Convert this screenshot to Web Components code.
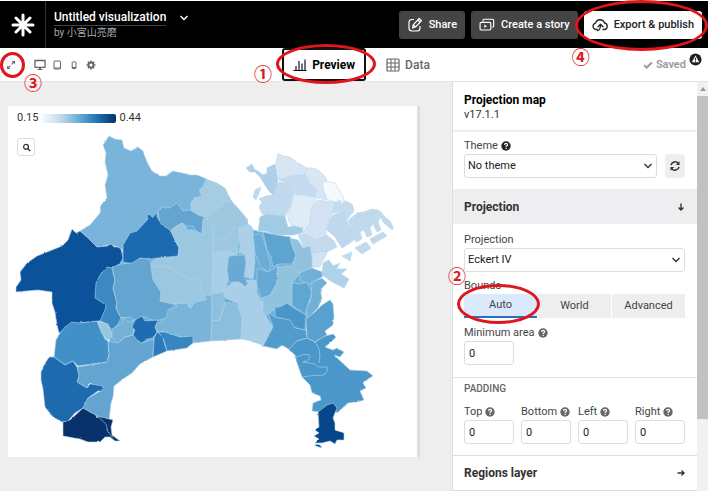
<!DOCTYPE html>
<html lang="en">
<head>
<meta charset="utf-8">
<title>Untitled visualization</title>
<style>
html,body{margin:0;height:100%}
body{font-family:Roboto,"Noto Sans CJK JP",sans-serif;font-size:11px;line-height:16px;color:#333;background:#fff;overflow:hidden}
</style>
</head>
<body>
<viz-editor></viz-editor>
<script>
const define=(name,html)=>customElements.define(name,class extends HTMLElement{
  constructor(){super();this.attachShadow({mode:'open'}).innerHTML='<style>*{box-sizing:border-box}button,input,select{font:inherit;color:inherit;margin:0}</style>'+(typeof html==='function'?html(this):html);}
});

const ICONS={
  burst:['0 0 24 24','<g stroke="currentColor" stroke-width="3" stroke-linecap="round"><path d="M12 2v20M2 12h20M5 5l14 14M19 5L5 19"/></g>'],
  down:['0 0 10 10','<path d="M1.5 3l3.500 3.500L8.500 3" fill="none" stroke="currentColor" stroke-width="1.400"/>'],
  share:['0 0 16 16','<path d="M7 2.500H5Q2 2.500 2 5.500V11q0 3 3 3h5q3 0 3-3V9M5.500 11l.7-3.200 6-6.300 2.300 2.200-6 6.300zM10.800 3l2.300 2.200M6.200 7.800l2.300 2.200" fill="none" stroke="currentColor" stroke-width="1.200" stroke-linejoin="round"/>'],
  story:['0 0 18 16','<path d="M4.500 4V3q0-1.500 1.500-1.500h9q1.500 0 1.500 1.500v6q0 1.500-1.500 1.500M2.500 5h9.500q1.300 0 1.300 1.300v6q0 1.300-1.300 1.300H2.500q-1.300 0-1.300-1.300v-6Q1.200 5 2.500 5z" fill="none" stroke="currentColor" stroke-width="1.300"/><path d="M6 7.500v3.600l3-1.800z" fill="currentColor"/>'],
  cloud:['0 0 16 16','<path d="M5 12.500H4A3.200 3.200 0 0 1 3.500 6.200 4.700 4.700 0 0 1 12.500 6a3.300 3.300 0 0 1 0 6.500H11M5.500 13.500q3-.5 3-5.500M6 9.800L8.500 7.300 11 9.800" fill="none" stroke="currentColor" stroke-width="1.300" stroke-linejoin="round" stroke-linecap="round"/>'],
  chart:['0 0 14 14','<path d="M.5 12.500h13M3 12V8M6 12V3M9 12V5.500M12 12V1.500" fill="none" stroke="currentColor" stroke-width="1.100"/>'],
  grid:['0 0 14 14','<rect x="1" y="1" width="12" height="12" rx="1" fill="none" stroke="currentColor" stroke-width="1.200"/><path d="M5 1v12M9 1v12M1 5h12M1 9h12" stroke="currentColor"/>'],
  expand:['0 0 10 10','<path d="M1.500 8.500l2.800-2.800M5.700 4.300l2.800-2.800" stroke="currentColor" stroke-width="1.200"/><path d="M5.800 1H9v3.200zM1 5.800V9h3.200z" fill="currentColor"/>'],
  desktop:['0 0 12 12','<path d="M1 1.500h10v6.800H1z" fill="none" stroke="currentColor" stroke-width="1.300"/><path d="M5 8h2v2h1.500v1h-5v-1H5z" fill="currentColor"/>'],
  tablet:['0 0 12 12','<rect x="3" y="2" width="6.500" height="8" rx=".8" fill="none" stroke="currentColor"/><path d="M3 9h6.500" stroke="currentColor"/>'],
  phone:['0 0 12 12','<rect x="4.200" y="2.800" width="3.800" height="6.800" rx=".8" fill="none" stroke="currentColor"/><path d="M4 8.500h4" stroke="currentColor"/>'],
  gear:['0 0 12 12','<circle cx="6" cy="6" r="2.500" fill="none" stroke="currentColor" stroke-width="1.900"/><path d="M6 1.600v1.700M6 8.700v1.700M1.600 6h1.700M8.700 6h1.700M2.900 2.900l1.200 1.200M7.900 7.900l1.200 1.200M9.100 2.900L7.900 4.100M4.100 7.900L2.900 9.100" stroke="currentColor" stroke-width="1.500"/>'],
  tick:['0 0 10 10','<path d="M1.200 5.200l2.500 2.500L8.800 2.500" fill="none" stroke="currentColor" stroke-width="2"/>'],
  warn:['0 0 14 14','<circle cx="7" cy="7" r="6.500" fill="#222"/><path d="M7 2.800l4 7.200H3z" fill="#fff"/><path d="M7 5.200v2.500M7 8.300v1" stroke="#222" stroke-width="1.200"/>'],
  help:['0 0 10 10','<circle cx="5" cy="5" r="4.700" fill="currentColor"/><path d="M3.500 3.900q.1-1.500 1.600-1.500t1.500 1.300Q6.600 4.700 5.200 5v1M5.200 6.700v1.200" fill="none" stroke="#fff" stroke-width="1.200"/>'],
  refresh:['0 0 12 12','<path d="M2 5.200A4.200 4.200 0 0 1 9.300 3.300M10 6.800A4.200 4.200 0 0 1 2.700 8.700" fill="none" stroke="currentColor" stroke-width="1.500"/><path d="M10.500 1.200v3.700H6.800zM1.500 10.800V7.100h3.700z" fill="currentColor"/>'],
  arrowdown:['0 0 10 10','<path d="M5 1.500v6.500M2.500 5.500L5 8l2.500-2.500" fill="none" stroke="currentColor" stroke-width="1.400"/>'],
  arrowright:['0 0 10 10','<path d="M1.500 5H8M5.500 2.500L8 5 5.500 7.500" fill="none" stroke="currentColor" stroke-width="1.400"/>'],
  search:['0 0 10 10','<circle cx="4.500" cy="4.300" r="2.700" fill="none" stroke="currentColor" stroke-width="1.400"/><path d="M6.300 6.200L9 9" stroke="currentColor" stroke-width="1.600"/>']
};
define('ui-icon',el=>{const [box,art]=ICONS[el.getAttribute('name')];
  return `<style>:host{display:inline-flex;flex:none;width:var(--size,10px);height:var(--size,10px)}svg{width:100%;height:100%}</style><svg viewBox="${box}" aria-hidden="true">${art}</svg>`;});

/* Red ellipse laid over its positioned parent, with a step number beside it */
define('ring-note',`<style>
:host{position:absolute;inset:var(--ring);z-index:5;border:3px solid #e0161d;border-radius:50%;pointer-events:none}
span{position:absolute;inset:var(--num);width:20px;height:20px;font:700 18px/20px "Noto Sans CJK JP",sans-serif;color:#e0161d;text-align:center}
</style><span><slot></slot></span>`);

define('app-header',`<style>
:host{display:flex;align-items:center;height:47px;margin-top:1px;background:#000;color:#fff;padding-right:6px}
.logo{display:grid;place-items:center;width:46px;align-self:stretch;border-right:1px solid #333;--size:24px}
.title{flex:1;padding-left:8px}
h1{display:flex;align-items:center;gap:13px;margin:0;font-size:12px;line-height:16px;font-weight:500}
h1 span{border-bottom:1px solid #444}
p{margin:0;font-size:10px;line-height:14px;color:#aaa}
.actions{display:flex;gap:6px}
.slot{position:relative}
button{display:flex;align-items:center;justify-content:center;gap:6px;height:28px;padding:0 8px;border:0;border-radius:3px;background:#444;color:#fff;font-size:11px;font-weight:500;white-space:nowrap;--size:16px}
.pub{background:#fff;color:#222}
ring-note{--ring:-11px -6px -12px -9px;--num:43px auto auto -7px}
</style>
<div class="logo"><ui-icon name="burst"></ui-icon></div>
<div class="title"><h1><span>Untitled visualization</span><ui-icon name="down"></ui-icon></h1><p>by 小宮山亮磨</p></div>
<div class="actions"><button><ui-icon name="share"></ui-icon>Share</button>
<button><ui-icon name="story"></ui-icon>Create a story</button>
<div class="slot"><button class="pub"><ui-icon name="cloud"></ui-icon>Export &amp; publish</button><ring-note>④</ring-note></div></div>`);

define('tool-bar',`<style>
:host{display:grid;grid-template-columns:1fr auto 1fr;height:34px;padding-left:4px;border-bottom:1px solid #e4e4e4;background:#fff}
.views{display:flex;align-items:center;gap:3px}
.views button{display:grid;place-items:center;border:0;padding:0;background:none;color:#666;width:14px;height:16px;--size:12px}
.slot{position:relative;margin-right:12px}
.views .first{--size:10px}
.slot ring-note{--ring:-5px -7px -5px -4px;--num:17px auto auto 20px}
.tabs{display:flex}
.tabs button{display:flex;align-items:center;justify-content:center;gap:5px;height:33px;border:0;background:none;padding:0 0 0 20px;font-size:12px;font-weight:500;color:#666;--size:14px}
.tab{position:relative}
.tabs .on{width:84px;color:#000;font-weight:700;border:2px solid #111;border-radius:3px;padding:0}
.tab ring-note{--ring:-4px -10px -3px -6px;--num:16px auto auto -26px}
.state{display:flex;justify-content:flex-end;align-items:center;padding-right:6px;gap:3px;color:#999;font-weight:600;font-size:11px}
.warn{--size:13px;align-self:flex-start;margin-top:5px}
</style>
<div class="views"><div class="slot"><button class="first" aria-label="Fullscreen"><ui-icon name="expand"></ui-icon></button><ring-note>③</ring-note></div>
<button aria-label="Desktop"><ui-icon name="desktop"></ui-icon></button><button aria-label="Tablet"><ui-icon name="tablet"></ui-icon></button><button aria-label="Phone"><ui-icon name="phone"></ui-icon></button><button aria-label="Settings"><ui-icon name="gear"></ui-icon></button></div>
<div class="tabs"><div class="tab"><button class="on"><ui-icon name="chart"></ui-icon>Preview</button><ring-note>①</ring-note></div><button><ui-icon name="grid"></ui-icon>Data</button></div>
<div class="state"><ui-icon name="tick"></ui-icon>Saved<ui-icon class="warn" name="warn"></ui-icon></div>`);

/* Municipalities: fill, then outline points; later shapes overlap earlier ones */
const REGIONS=[
['#6aadd6','107,267 150,225 206,180 231,200 253,230 290,238 312,268 322,290 306,330 290,346 263,345 241,338 193,342 153,355 110,350'],
['#7ab4da','103,145 109,136 115,139 122,140 124,148 131,151 138,147 143,151 147,162 152,171 160,176 166,176 173,171 182,173 190,175 197,175 207,179 205,190 200,213 180,222 158,222 123,250 118,247 109,245 97,247 88,238 80,231 90,225 100,213 101,205 107,198 105,185 108,175 105,162 106,153'],
['#0c529a','80,231 76,233 72,229 68,240 62,246 47,252 37,256 27,263 20,272 21,280 16,287 16,292 38,290 52,292 52,303 55,312 57,325 59,333 72,325 80,323 100,321 112,318 115,267 121,263 123,258 121,249 118,247 114,247 111,244 107,246 97,247 88,238'],
['#3b88c2','107,267 112,268 115,280 113,288 117,303 116,308 121,318 118,324 112,330 107,324 100,321 105,310 106,305 95,298 96,283 100,275'],
['#63a5d0','112,267 121,264 130,263 140,258 150,259 155,280 162,292 175,304 170,310 166,318 155,321 142,316 137,321 130,317 121,318 116,308 117,303 113,288 115,280'],
['#63a5d0','158,210 163,207 170,208 177,203 183,211 190,210 206,218 202,234 196,231 193,226 185,226 182,223 175,227 171,232 160,225'],
['#1c6ab0','157,212 155,215 152,217 149,214 147,216 148,219 137,231 130,233 123,245 123,262 128,263 132,263 140,258 150,259 157,258 178,256 179,248 175,240 170,230 162,225 157,217'],
['#9bc8e0','171,230 175,227 182,223 185,225 187,230 193,230 202,234 203,219 208,218 213,227 213,240 213,253 213,295 205,295 200,300 175,290 151,267 151,263 155,259 178,257 179,248 175,240'],
['#9bc8e0','151,267 162,266 173,268 177,273 185,277 190,280 193,277 201,284 202,293 206,300 201,301 195,302 190,309 187,303 173,304 160,301 161,292 153,280'],
['#7ab5d9','168,310 177,307 173,304 187,303 190,309 195,302 206,300 205,295 212,295 212,320 211,341 193,343 190,338 180,337 165,332 158,332 155,326 166,318'],
['#a6cce4','206,179 217,183 225,188 231,200 231,204 225,202 217,210 206,217 198,215 191,210 191,202 196,197 202,196 199,190 203,187'],
['#9dc8e0','231,202 238,208 248,220 247,224 237,229 235,227 227,238 213,240 213,227 206,218 217,210 225,202'],
['#9dc8e0','213,240 219,240 228,238 235,227 238,240 238,254 227,251 213,253'],
['#acd0e8','248,224 251,225 253,230 255,263 253,279 245,277 246,263 244,254 239,253 240,246 237,229'],
['#a8cfe7','213,253 227,251 237,254 228,257 227,265 228,280 225,292 212,294'],
['#a9cee7','238,282 248,280 256,280 257,293 263,303 263,312 273,327 267,340 263,347 260,343 253,341 241,339 240,317 238,303 225,298 223,293 227,287 233,282'],
['#69aad4','229,256 245,255 246,263 244,277 248,283 245,287 241,283 238,282 229,282 227,270'],
['#8ebfdd','212,293 222,294 225,303 220,320 212,321'],
['#8bbedd','225,303 235,302 238,307 242,317 241,339 228,340 211,341 212,321 220,320'],
['#4290c8','60,333 65,327 72,322 80,323 97,321 100,328 105,339 108,341 109,355 107,362 78,366 73,361 65,365 54,357 56,340'],
['#96c6e0','98,321 108,324 112,335 110,339 107,340 101,332'],
['#63a5d0','108,341 118,343 125,337 133,335 142,343 154,339 153,357 140,364 132,373 123,379 114,386 113,397 111,403 110,412 109,420 97,416 83,408 88,398 102,390 90,383 87,388 77,382 79,376 77,367 107,362 109,355'],
['#74b2d8','112,329 122,323 123,317 128,322 135,320 133,335 125,337 118,343 112,338'],
['#1f6cb1','135,320 142,316 145,321 158,320 155,327 157,332 153,338 147,339 142,343 137,340 133,335 135,330 132,327'],
['#2b7bbc','157,332 162,335 165,345 167,351 153,357 154,339'],
['#3786c0','158,332 165,332 180,337 193,336 193,343 187,348 167,351 164,340'],
['#1d6aaf','54,357 49,357 44,365 41,372 41,380 43,389 45,407 53,417 62,422 68,421 75,413 83,408 88,398 98,391 102,391 103,386 91,384 87,388 77,382 79,376 77,367 73,361 65,365'],
['#08306b','83,408 90,412 97,416 113,420 111,427 112,435 120,441 115,441 110,437 105,437 100,442 88,442 80,439 63,436 63,422 70,420'],
['#add0e8','246,168 252,164 254,169 258,171 263,175 267,173 267,168 275,164 278,180 277,190 273,195 268,190 260,177 255,172 250,172'],
['#c3daee','253,197 255,190 261,187 259,193 256,200'],
['#d7e6f5','278,153 283,156 290,157 298,163 307,168 305,175 290,177 279,180 278,172 275,168'],
['#d9e7f5','307,168 313,168 318,170 323,174 327,180 324,184 326,200 314,197 317,190 305,175'],
['#c6dbef','279,180 290,176 305,175 310,183 317,190 314,197 300,195 295,194 288,183'],
['#f5faff','323,181 328,182 335,183 341,193 345,202 338,200 335,203 327,199 323,189'],
['#c1d9ee','278,182 288,183 294,193 290,207 285,216 275,216 268,214 262,214 259,207 262,202 259,199 266,196 273,195'],
['#dfebf7','295,194 316,197 312,210 311,222 308,227 292,228 287,215 291,206'],
['#d3e3f4','317,200 326,201 335,202 333,212 327,223 326,235 318,240 308,237 301,232 309,226 312,208'],
['#c5dbef','335,203 340,201 342,204 345,201 352,204 354,210 347,220 343,212 333,213'],
['#bfd8ed','333,215 343,212 348,224 357,237 350,243 342,248 335,237 327,230 328,222'],
['#c1d9ed','348,221 357,213 364,212 372,209 380,211 385,217 390,221 393,227 392,230 384,223 380,217 378,222 381,230 377,232 373,224 370,228 372,235 367,237 364,230 360,232 362,239 356,242'],
['#c1d9ed','355,248 366,242 371,248 362,254'],['#c1d9ed','370,239 383,232 387,236 373,244'],['#c1d9ed','342,256 352,252 350,261'],
['#a1cae3','260,217 266,214 285,216 288,227 294,226 303,228 302,233 293,235 277,235 265,231 258,232'],
['#c5daef','298,235 304,234 317,240 327,235 334,241 337,247 327,252 312,255 303,247'],
['#d1e2f3','312,253 327,251 325,257 322,262 320,267 312,267'],
['#6aadd6','253,234 262,235 267,250 271,267 268,272 260,266 255,253'],
['#5ea4d1','263,232 277,235 290,237 292,246 296,255 292,264 280,264 273,267 271,257 267,250'],
['#91c1de','290,238 298,240 303,248 310,246 312,257 312,268 300,273 292,267 296,255'],
['#65a9d4','257,268 268,272 278,266 277,283 270,297 262,298 257,287'],
['#91c2de','278,267 292,266 300,273 292,283 295,305 280,305 265,317 262,298 270,295 277,283'],
['#6eb0d8','300,273 306,270 312,268 325,273 322,277 313,282 308,285 300,280'],
['#b0d2e8','323,263 329,260 333,266 340,263 337,269 347,269 341,274 349,279 344,288 332,282 322,275'],
['#5fa6d2','292,283 300,284 307,282 312,292 309,302 305,315 292,305'],
['#71b1d8','312,282 322,278 327,283 320,290 322,298 318,308 308,318 306,310 311,298'],
['#4b96c9','275,307 280,307 287,303 292,307 306,315 305,330 292,327 283,319 275,317'],
['#529ccd','268,312 275,317 285,319 290,320 295,328 306,330 307,338 297,341 290,350 282,345 277,349 263,346 273,327'],
['#58a0d0','330,300 333,304 334,317 333,325 325,331 327,335 315,342 307,338 306,319 315,312 322,305'],
['#4b97c9','307,338 315,342 325,336 333,334 336,337 330,343 325,347 333,350 337,348 344,352 340,357 334,355 350,370 367,371 373,376 368,379 363,383 366,388 360,391 364,400 357,402 348,403 337,413 333,407 320,412 312,411 313,403 321,400 320,396 312,393 310,385 302,377 297,363 295,355 289,350 292,346 297,341'],
['#08468b','333,403 337,408 333,418 335,423 335,430 344,433 344,440 337,440 335,444 330,441 322,443 315,443 319,439 314,436 319,433 315,430 319,427 318,412 327,405'],
['#08468b','315,444 320,445 322,448 316,446']
];
define('region-map',`<style>:host{display:block}svg{display:block;width:100%}</style>
<svg viewBox="8 106 409 351" role="img" aria-label="Map of municipalities"><defs><filter id="coast" x="-5%" y="-5%" width="110%" height="110%" color-interpolation-filters="sRGB"><feTurbulence type="fractalNoise" baseFrequency=".25" numOctaves="2" seed="4"/><feDisplacementMap in="SourceGraphic" scale="2" xChannelSelector="R" yChannelSelector="G"/></filter></defs>
<g filter="url(#coast)" stroke="#b4d6ec" stroke-width=".6" stroke-linejoin="round">${REGIONS.map(([f,p])=>`<polygon fill="${f}" points="${p}"/>`).join('')}
<path fill="none" d="M295 358q8-5 14-3 3 5-6 7l12 2 3 3 9 0q2 5-5 9l-5-1-15 2M315 342q7 8 4 21M97 416l9 8 2 8 5 6"/></g></svg>`);

define('map-card',`<style>
:host{display:grid;background:#fff;border-right:3px solid #ddd}
region-map,.over{grid-area:1/1}
.over{z-index:1;padding:4px 9px;justify-self:start}
.legend{display:flex;align-items:center;gap:3px;line-height:16px}
.ramp{width:75px;height:9px;border-radius:2px;background:linear-gradient(90deg,#f7fbff,#c6dbef 25%,#6baed6 50%,#2171b5 75%,#08306b)}
button{display:grid;place-items:center;width:18px;height:18px;margin-top:12px;padding:0;border:1px solid #ddd;border-radius:3px;background:#fff;--size:9px}
</style>
<region-map></region-map><div class="over"><div class="legend"><span>0.15</span><span class="ramp"></span><span>0.44</span></div><button aria-label="Search"><ui-icon name="search"></ui-icon></button></div>`);

define('select-field',el=>`<style>
:host{display:grid;flex:1}
select,ui-icon{grid-area:1/1}
select{appearance:none;width:100%;height:24px;padding:0 3px;border:1px solid #ddd;border-radius:3px;background:#fff;color:#222}
ui-icon{justify-self:end;align-self:center;margin-right:4px;pointer-events:none}
</style><select aria-label="${el.getAttribute('label')}"><option>${el.getAttribute('value')}</option></select><ui-icon name="down"></ui-icon>`);

define('number-field',el=>`<style>
:host{display:block}
label{display:flex;align-items:center;gap:3px;color:#444;white-space:nowrap}
input{display:block;width:50px;height:24px;padding:0 4px;border:1px solid #ddd;border-radius:3px;color:#222}
ui-icon{color:#666}
</style><label for="n">${el.getAttribute('label')}<ui-icon name="help"></ui-icon></label><input id="n" value="0">`);

define('settings-panel',`<style>
:host{display:flex;background:#fff;border-left:1px solid #ddd}
.body{flex:1;min-width:0}
section,header{padding:0 12px 0 11px}
header{padding-top:10px;height:50px;border-bottom:2px solid #eee;line-height:14px;color:#333}
h2{margin:0;font-size:12px;line-height:16px;color:#000}
.row{display:flex;gap:8px}
.label{display:flex;align-items:center;gap:3px;color:#444}
.label ui-icon{color:#222}
.theme{padding-top:6px;height:57px}
.re{display:grid;place-items:center;width:20px;height:24px;padding:0;border:0;border-radius:3px;background:#eee;--size:12px}
h3{display:flex;justify-content:space-between;align-items:center;margin:0;padding:0 11px;height:35px;font-size:12px;color:#333;--size:10px}
.open{background:#eeeef0}
.proj{padding-top:8px;height:153px}
.label.b{margin-top:6px}
.seg{display:grid;grid-template-columns:repeat(3,1fr);gap:1px;height:24px;margin-bottom:7px}
.seg div{position:relative;display:grid}
.seg button{border:0;padding:0;background:#eee;color:#444}
.seg .on{background:#dbe9fd;border-bottom:2px solid #2c6fbb}
.seg ring-note{--ring:-10px -3px -6px -7px;--num:-22px auto auto -13px}
.pad{border-top:1px solid #e4e4e4;padding-top:3px;height:79px;border-bottom:1px solid #ddd}
h4{margin:0 0 7px;font-size:10px;line-height:16px;font-weight:500;color:#666}
.pads{display:grid;grid-template-columns:repeat(4,1fr);column-gap:7px}
.end{border-bottom:1px solid #ddd}
.bar{width:11px;background:#f1f1f1;display:flex;flex-direction:column;align-items:center}
.up{width:0;margin:5px 0;border:3px solid transparent;border-top:0;border-bottom:4px solid #999}
.thumb{width:100%;height:79%;background:#c1c1c1}
</style>
<div class="body">
<header><h2>Projection map</h2>v17.1.1</header>
<section class="theme"><div class="label">Theme<ui-icon name="help"></ui-icon></div><div class="row"><select-field label="Theme" value="No theme"></select-field><button class="re" aria-label="Reload theme"><ui-icon name="refresh"></ui-icon></button></div></section>
<h3 class="open">Projection<ui-icon name="arrowdown"></ui-icon></h3>
<section class="proj"><div class="label">Projection</div><select-field label="Projection" value="Eckert IV"></select-field>
<div class="label b">Bounds</div><div class="seg"><div><button class="on">Auto</button><ring-note>②</ring-note></div><div><button>World</button></div><div><button>Advanced</button></div></div>
<number-field label="Minimum area"></number-field></section>
<section class="pad"><h4>PADDING</h4><div class="pads"><number-field label="Top"></number-field><number-field label="Bottom"></number-field><number-field label="Left"></number-field><number-field label="Right"></number-field></div></section>
<h3 class="end">Regions layer<ui-icon name="arrowright"></ui-icon></h3>
</div><div class="bar"><div class="up"></div><div class="thumb"></div></div>`);

define('viz-editor',`<style>
:host{display:flex;flex-direction:column;height:100vh;overflow:hidden}
main{flex:1;min-height:0;display:grid;grid-template-columns:1fr 256px;background:#eee}
.stage{padding:24px 32px 34px 8px}
</style><app-header></app-header><tool-bar></tool-bar><main><div class="stage"><map-card></map-card></div><settings-panel></settings-panel></main>`);
</script>
</body>
</html>
